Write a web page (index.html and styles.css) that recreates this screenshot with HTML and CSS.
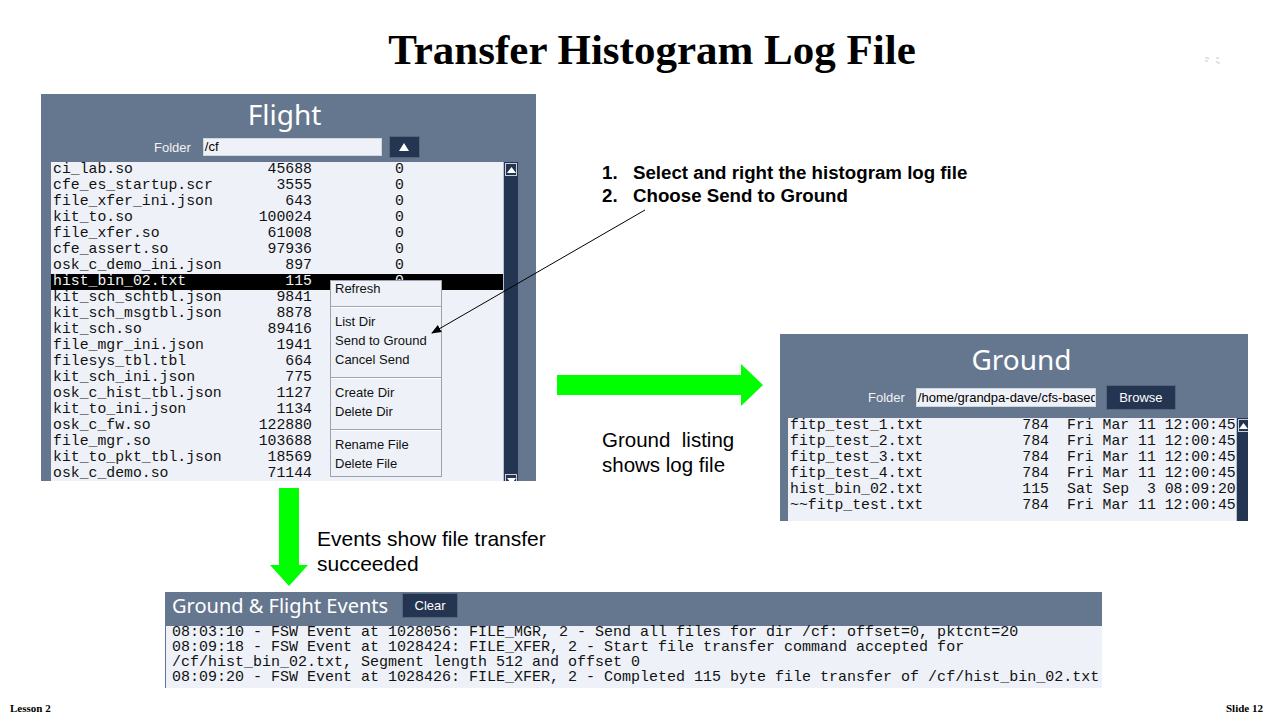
FILE: index.html
```html
<!DOCTYPE html>
<html>
<head>
<meta charset="utf-8">
<title>Transfer Histogram Log File</title>
<link rel="stylesheet" href="styles.css">
</head>
<body>
<div class="slide">
  <h1 class="title">Transfer Histogram Log File</h1>
  <svg class="corner-mark" width="18" height="10" viewBox="0 0 18 10">
    <path d="M1 3 h3 l1 1 M1 6 h3 M12 3 h3 M12 6 l2 2 h2" stroke="#c8c8c8" stroke-width="1" fill="none"/>
  </svg>

  <section class="panel flight">
    <div class="panel-title flight-title">Flight</div>
    <div class="folder-row flight-folder">
      <span class="folder-label">Folder</span>
      <div class="folder-input fi-flight">/cf</div>
      <div class="btn btn-up"><svg width="10" height="8" viewBox="0 0 10 8"><path d="M5 0 L10 8 L0 8 Z" fill="#fff"/></svg></div>
    </div>
    <div class="list-wrap flight-wrap">
      <div class="list flight-list">
        <div class="row"><span class="c-name">ci_lab.so</span><span class="c-size">45688</span><span class="c-zero">0</span></div>
        <div class="row"><span class="c-name">cfe_es_startup.scr</span><span class="c-size">3555</span><span class="c-zero">0</span></div>
        <div class="row"><span class="c-name">file_xfer_ini.json</span><span class="c-size">643</span><span class="c-zero">0</span></div>
        <div class="row"><span class="c-name">kit_to.so</span><span class="c-size">100024</span><span class="c-zero">0</span></div>
        <div class="row"><span class="c-name">file_xfer.so</span><span class="c-size">61008</span><span class="c-zero">0</span></div>
        <div class="row"><span class="c-name">cfe_assert.so</span><span class="c-size">97936</span><span class="c-zero">0</span></div>
        <div class="row"><span class="c-name">osk_c_demo_ini.json</span><span class="c-size">897</span><span class="c-zero">0</span></div>
        <div class="row selected"><span class="c-name">hist_bin_02.txt</span><span class="c-size">115</span><span class="c-zero">0</span></div>
        <div class="row"><span class="c-name">kit_sch_schtbl.json</span><span class="c-size">9841</span></div>
        <div class="row"><span class="c-name">kit_sch_msgtbl.json</span><span class="c-size">8878</span></div>
        <div class="row"><span class="c-name">kit_sch.so</span><span class="c-size">89416</span></div>
        <div class="row"><span class="c-name">file_mgr_ini.json</span><span class="c-size">1941</span></div>
        <div class="row"><span class="c-name">filesys_tbl.tbl</span><span class="c-size">664</span></div>
        <div class="row"><span class="c-name">kit_sch_ini.json</span><span class="c-size">775</span></div>
        <div class="row"><span class="c-name">osk_c_hist_tbl.json</span><span class="c-size">1127</span></div>
        <div class="row"><span class="c-name">kit_to_ini.json</span><span class="c-size">1134</span></div>
        <div class="row"><span class="c-name">osk_c_fw.so</span><span class="c-size">122880</span></div>
        <div class="row"><span class="c-name">file_mgr.so</span><span class="c-size">103688</span></div>
        <div class="row"><span class="c-name">kit_to_pkt_tbl.json</span><span class="c-size">18569</span></div>
        <div class="row"><span class="c-name">osk_c_demo.so</span><span class="c-size">71144</span></div>
      </div>
      <div class="scrollbar">
        <div class="sb-btn"><svg width="9" height="6" viewBox="0 0 9 6"><path d="M4.5 0 L9 6 L0 6 Z" fill="#fff"/></svg></div>
        <div class="sb-track"></div>
        <div class="sb-btn"><svg width="9" height="6" viewBox="0 0 9 6"><path d="M0 0 L9 0 L4.5 6 Z" fill="#fff"/></svg></div>
      </div>
    </div>
    <div class="menu">
      <div class="menu-item first">Refresh</div>
      <div class="menu-sep"></div>
      <div class="menu-item">List Dir</div>
      <div class="menu-item">Send to Ground</div>
      <div class="menu-item">Cancel Send</div>
      <div class="menu-sep"></div>
      <div class="menu-item">Create Dir</div>
      <div class="menu-item">Delete Dir</div>
      <div class="menu-sep"></div>
      <div class="menu-item">Rename File</div>
      <div class="menu-item">Delete File</div>
    </div>
  </section>

  <div class="steps">
    <div class="step"><span class="step-num">1.</span><span>Select and right the histogram log file</span></div>
    <div class="step"><span class="step-num">2.</span><span>Choose Send to Ground</span></div>
  </div>

  <svg class="pointer" width="260" height="150" viewBox="0 0 260 150">
    <defs>
      <marker id="ah" markerWidth="10" markerHeight="8" refX="9" refY="4" orient="auto" markerUnits="userSpaceOnUse">
        <path d="M0 0 L10 4 L0 8 Z" fill="#000"/>
      </marker>
    </defs>
    <line x1="225" y1="10" x2="12" y2="133" stroke="#000" stroke-width="1" marker-end="url(#ah)"/>
  </svg>

  <svg class="arrow-right" width="208" height="44" viewBox="0 0 208 44">
    <path d="M0 12 H184 V1 L206 22 L184 43 V32 H0 Z" fill="#00ff00"/>
  </svg>

  <svg class="arrow-down" width="40" height="100" viewBox="0 0 40 100">
    <path d="M9 0 H29 V77 H38 L19 98 L0 77 H9 Z" fill="#00ff00"/>
  </svg>

  <p class="note note-ground">Ground&nbsp; listing<br>shows log file</p>
  <p class="note note-events">Events show file transfer<br>succeeded</p>

  <section class="panel ground">
    <div class="panel-title ground-title">Ground</div>
    <div class="folder-row ground-folder">
      <span class="folder-label">Folder</span>
      <div class="folder-input fi-ground">/home/grandpa-dave/cfs-based</div>
      <div class="btn btn-browse">Browse</div>
    </div>
    <div class="list-wrap ground-wrap">
      <div class="list ground-list">
        <div class="row"><span class="g-name">fitp_test_1.txt</span><span class="g-size">784</span><span class="g-date">Fri Mar 11 12:00:45</span></div>
        <div class="row"><span class="g-name">fitp_test_2.txt</span><span class="g-size">784</span><span class="g-date">Fri Mar 11 12:00:45</span></div>
        <div class="row"><span class="g-name">fitp_test_3.txt</span><span class="g-size">784</span><span class="g-date">Fri Mar 11 12:00:45</span></div>
        <div class="row"><span class="g-name">fitp_test_4.txt</span><span class="g-size">784</span><span class="g-date">Fri Mar 11 12:00:45</span></div>
        <div class="row"><span class="g-name">hist_bin_02.txt</span><span class="g-size">115</span><span class="g-date">Sat Sep  3 08:09:20</span></div>
        <div class="row"><span class="g-name">~~fitp_test.txt</span><span class="g-size">784</span><span class="g-date">Fri Mar 11 12:00:45</span></div>
      </div>
      <div class="scrollbar">
        <div class="sb-btn"><svg width="9" height="6" viewBox="0 0 9 6"><path d="M4.5 0 L9 6 L0 6 Z" fill="#fff"/></svg></div>
        <div class="sb-track"></div>
      </div>
    </div>
  </section>

  <section class="panel events">
    <div class="events-head">
      <span class="events-title">Ground &amp; Flight Events</span>
      <div class="btn btn-clear">Clear</div>
    </div>
    <div class="events-log">
      <div class="log-line">08:03:10 - FSW Event at 1028056: FILE_MGR, 2 - Send all files for dir /cf: offset=0, pktcnt=20</div>
      <div class="log-line">08:09:18 - FSW Event at 1028424: FILE_XFER, 2 - Start file transfer command accepted for</div>
      <div class="log-line">/cf/hist_bin_02.txt, Segment length 512 and offset 0</div>
      <div class="log-line">08:09:20 - FSW Event at 1028426: FILE_XFER, 2 - Completed 115 byte file transfer of /cf/hist_bin_02.txt</div>
    </div>
  </section>

  <div class="footer footer-left">Lesson 2</div>
  <div class="footer footer-right">Slide 12</div>
</div>
</body>
</html>
```

FILE: styles.css
```css
html, body {
  margin: 0;
  padding: 0;
  background: #ffffff;
}

.slide {
  position: relative;
  width: 1280px;
  height: 720px;
  overflow: hidden;
  background: #ffffff;
  font-family: "Liberation Sans", Arial, sans-serif;
}

.title {
  position: absolute;
  left: 0;
  top: 24px;
  width: 1304px;
  margin: 0;
  text-align: center;
  font-family: "Liberation Serif", "Times New Roman", serif;
  font-weight: bold;
  font-size: 43px;
  line-height: 52px;
  color: #000;
}

.corner-mark {
  position: absolute;
  left: 1204px;
  top: 55px;
}

/* ---------- panels ---------- */
.panel {
  position: absolute;
  background: #65778e;
  box-sizing: border-box;
  overflow: hidden;
}

.flight {
  left: 41px;
  top: 94px;
  width: 495px;
  height: 387px;
}

.ground {
  left: 780px;
  top: 334px;
  width: 468px;
  height: 187px;
}

.events {
  left: 165px;
  top: 592px;
  width: 937px;
  height: 96px;
  display: flex;
  flex-direction: column;
}

.panel-title {
  height: 41px;
  line-height: 41px;
  text-align: center;
  color: #ffffff;
  font-family: "Noto Sans", "Open Sans", sans-serif;
  font-size: 28px;
}

.flight-title {
  padding-right: 8px;
  line-height: 40px;
}

.ground-title {
  height: 46px;
  line-height: 50px;
  padding-left: 15px;
}

.folder-row {
  display: flex;
  align-items: center;
}

.flight-folder {
  height: 24px;
  padding-left: 113px;
}

.ground-folder {
  height: 27px;
  margin-top: 4px;
  padding-left: 88px;
}

.folder-label {
  color: #f2f2f2;
  font-size: 13px;
}

.folder-input {
  box-sizing: border-box;
  background: #eef2f8;
  color: #000;
  font-size: 13px;
  white-space: nowrap;
  overflow: hidden;
  border: 1px solid #d0d6de;
  padding-left: 1px;
}

.fi-flight {
  width: 179px;
  height: 18px;
  line-height: 16px;
  margin-left: 12px;
}

.fi-ground {
  width: 180px;
  height: 19px;
  line-height: 17px;
  margin-left: 11px;
}

.btn {
  box-sizing: border-box;
  background: #243551;
  color: #ffffff;
  font-size: 13px;
  display: flex;
  align-items: center;
  justify-content: center;
  border: 1px solid #56657a;
}

.btn-up {
  width: 31px;
  height: 22px;
  margin-left: 7px;
}

.btn-browse {
  width: 70px;
  height: 25px;
  margin-left: 10px;
}

/* ---------- lists ---------- */
.list-wrap {
  display: flex;
  margin-top: 3px;
  margin-left: 10px;
}

.ground-wrap {
  margin-top: 7px;
  margin-left: 8px;
}

.list {
  background: #eef2f8;
  font-family: "Liberation Mono", "Courier New", monospace;
  font-size: 14.8px;
  color: #111;
  box-sizing: border-box;
}

.flight-list {
  width: 452px;
  height: 326px;
}

.ground-list {
  width: 452px;
  height: 103px;
}

.row {
  display: flex;
  height: 16px;
  line-height: 14px;
  white-space: pre;
  padding-left: 2px;
}

.row.selected {
  background: #000;
  color: #f4f4f4;
}

.c-name { width: 205px; }
.c-size { width: 54px; text-align: right; }
.c-zero { margin-left: 83px; }

.g-name { width: 205px; }
.g-size { width: 54px; text-align: right; }
.g-date { margin-left: 18px; }

.scrollbar {
  width: 15px;
  flex: none;
  background: #243551;
  display: flex;
  flex-direction: column;
  box-sizing: border-box;
  border-left: 1px solid #b8c0cc;
}

.flight .scrollbar { height: 326px; }
.ground .scrollbar { height: 103px; }

.sb-btn {
  height: 11px;
  margin: 1px;
  border: 1px solid #c9d0da;
  display: flex;
  align-items: center;
  justify-content: center;
  flex: none;
}

.sb-track {
  flex: 1;
}

/* ---------- context menu ---------- */
.menu {
  position: absolute;
  left: 289px;
  top: 186px;
  width: 112px;
  box-sizing: border-box;
  background: #eef2f8;
  border: 1px solid #9aa2ad;
  padding: 0 0 3px 0;
  font-size: 13px;
  color: #111;
}

.menu-item {
  height: 19px;
  line-height: 19px;
  padding-left: 4px;
}

.menu-item.first {
  height: 17px;
  line-height: 15px;
}

.menu-sep {
  margin: 8px 0 4px 0;
  border-top: 1px solid #a0a6ae;
  border-bottom: 1px solid #ffffff;
}

/* ---------- annotations ---------- */
.steps {
  position: absolute;
  left: 602px;
  top: 161px;
  font-weight: bold;
  font-size: 18.7px;
  line-height: 23px;
  color: #000;
}

.step {
  display: flex;
}

.step-num {
  width: 31px;
  flex: none;
}

.pointer {
  position: absolute;
  left: 420px;
  top: 200px;
}

.arrow-right {
  position: absolute;
  left: 557px;
  top: 363px;
}

.arrow-down {
  position: absolute;
  left: 270px;
  top: 488px;
}

.note {
  position: absolute;
  margin: 0;
  font-size: 20.5px;
  line-height: 25px;
  color: #000;
}

.note-ground {
  left: 602px;
  top: 427px;
}

.note-events {
  left: 317px;
  top: 526px;
  font-size: 21px;
}

/* ---------- events ---------- */
.events-head {
  height: 34px;
  display: flex;
  align-items: flex-start;
  flex: none;
}

.events-title {
  color: #ffffff;
  font-family: "Noto Sans", "Open Sans", sans-serif;
  font-size: 20px;
  line-height: 28px;
  padding-left: 7px;
}

.btn-clear {
  width: 56px;
  height: 25px;
  margin-left: 14px;
  margin-top: 1px;
}

.events-log {
  flex: 1;
  margin-left: 1px;
  background: #eef2f8;
  font-family: "Liberation Mono", "Courier New", monospace;
  font-size: 15px;
  color: #111;
  padding-left: 6px;
}

.log-line {
  height: 15px;
  line-height: 14px;
  white-space: pre;
}

/* ---------- footer ---------- */
.footer {
  position: absolute;
  top: 702px;
  font-family: "Liberation Serif", "Times New Roman", serif;
  font-weight: bold;
  font-size: 11px;
  line-height: 12px;
  color: #000;
}

.footer-left { left: 10px; }
.footer-right { left: 1226px; }
```
